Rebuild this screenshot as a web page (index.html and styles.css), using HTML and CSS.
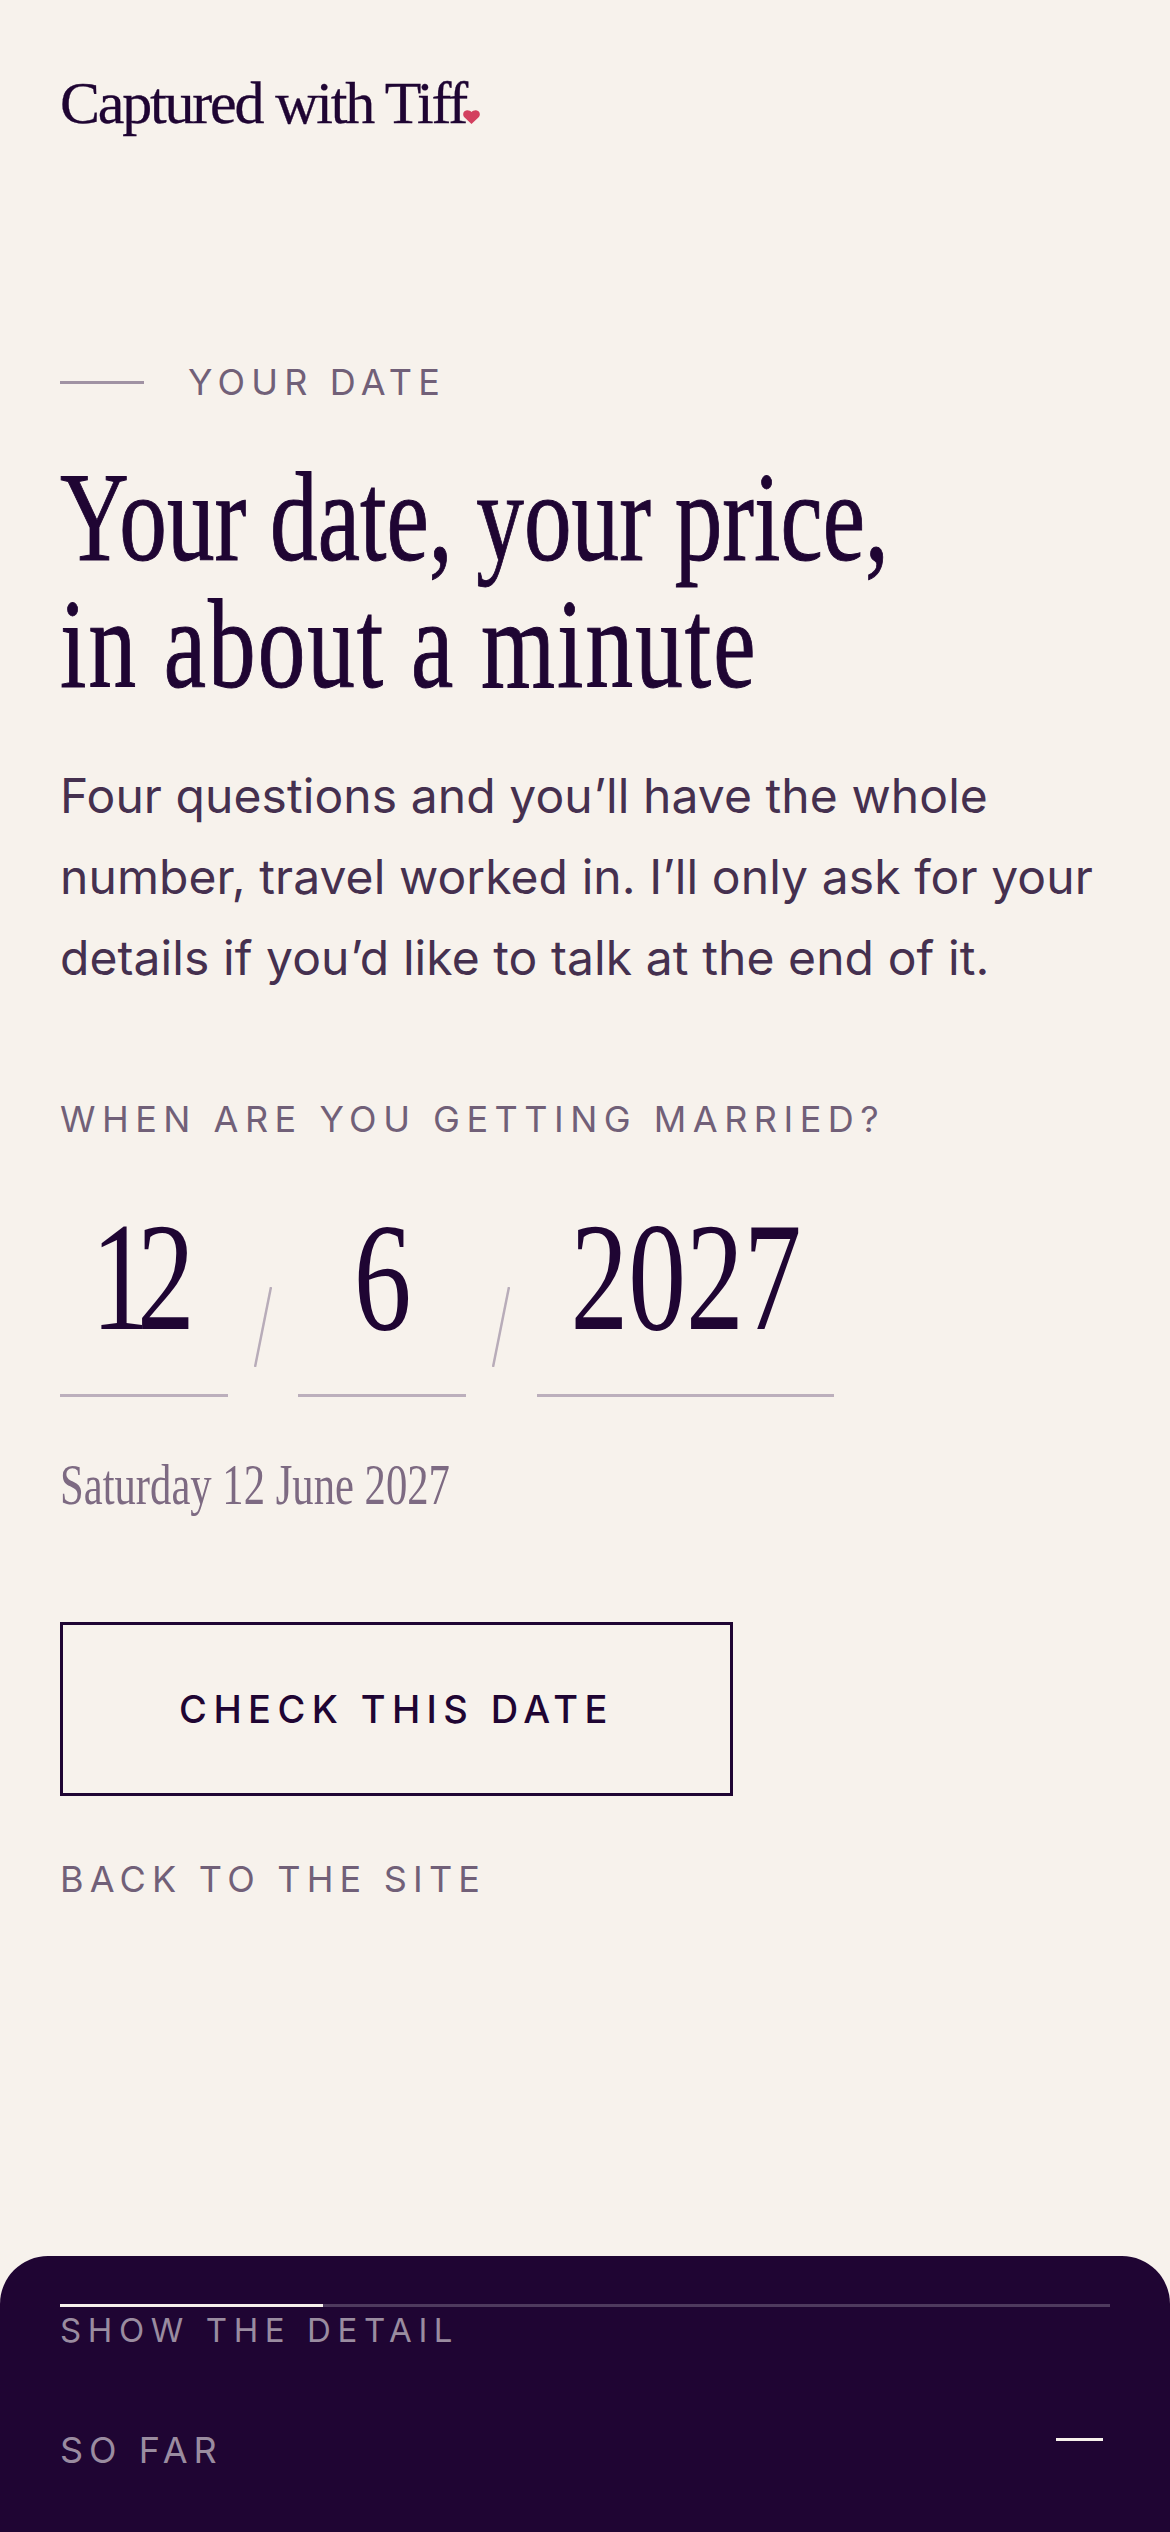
FILE: index.html
```html
<!DOCTYPE html>
<html lang="en">
<head>
    <meta charset="UTF-8">
    <meta name="viewport" content="width=device-width, initial-scale=1.0">
    <title>Your date - Captured with Tiff</title>
    <link rel="stylesheet" href="styles.css">
</head>
<body>
    <div class="page">
        <header class="brand">
            <span class="logo">Captured with Tiff</span>
            <svg class="heart" viewBox="0 0 17 14" width="17" height="14"><path d="M8.5 14 L1.6 7.6 C-1.2 4.6 0.4 0.4 4 0.2 C5.9 0.1 7.5 0.9 8.5 2 C9.5 0.9 11.1 0.1 13 0.2 C16.6 0.4 18.2 4.6 15.4 7.6 Z" fill="#d3405f"/></svg>
        </header>

        <main class="content">
            <div class="eyebrow">
                <span class="eyebrow-line"></span>
                <span class="eyebrow-text">YOUR DATE</span>
            </div>
            <h1 class="title">Your date, your price,<br><span class="title-second">in about a minute</span></h1>
            <p class="intro">Four questions and you’ll have the whole<br>number, travel worked in. I’ll only ask for your<br>details if you’d like to talk at the end of it.</p>

            <form class="date-form">
                <label class="date-label">WHEN ARE YOU GETTING MARRIED?</label>
                <div class="date-row">
                    <div class="date-field short"><span class="date-value tight">12</span></div>
                    <svg class="slash" viewBox="0 0 18 80" width="18" height="80"><line x1="17" y1="0" x2="1" y2="80" stroke="#b8acb9" stroke-width="2.5"/></svg>
                    <div class="date-field short"><span class="date-value">6</span></div>
                    <svg class="slash" viewBox="0 0 18 80" width="18" height="80"><line x1="17" y1="0" x2="1" y2="80" stroke="#b8acb9" stroke-width="2.5"/></svg>
                    <div class="date-field long"><span class="date-value">2027</span></div>
                </div>
                <p class="date-note">Saturday 12 June 2027</p>
                <button type="button" class="check-btn">CHECK THIS DATE</button>
                <a class="back-link">BACK TO THE SITE</a>
            </form>
        </main>

        <footer class="panel">
            <div class="progress"><div class="progress-fill"></div></div>
            <div class="panel-detail">SHOW THE DETAIL</div>
            <div class="panel-row">
                <span class="panel-sofar">SO FAR</span>
                <span class="panel-dash"></span>
            </div>
        </footer>
    </div>
</body>
</html>
```

FILE: styles.css
```css
* {
    box-sizing: border-box;
}
body {
    margin: 0;
    background-color: #f7f2ec;
    font-family: Inter, "Liberation Sans", sans-serif;
    color: #1f0533;
}
.page {
    display: flex;
    flex-direction: column;
    height: 2532px;
    overflow: hidden;
}
.brand {
    display: flex;
    align-items: flex-end;
    padding: 69px 60px 0;
    height: 137px;
}
.logo {
    display: inline-block;
    font-family: "Liberation Serif", serif;
    font-size: 60px;
    line-height: 68px;
    letter-spacing: -2.2px;
    white-space: nowrap;
    -webkit-text-stroke: .3px #1f0533;
}
.heart {
    margin-left: -3px;
    margin-bottom: 13px;
}
.content {
    padding: 0 60px;
}
.eyebrow {
    display: flex;
    align-items: center;
    gap: 44px;
    margin-top: 223px;
}
.eyebrow-line {
    width: 84px;
    height: 3px;
    background-color: #a092a3;
}
.eyebrow-text {
    font-size: 36px;
    line-height: 44px;
    letter-spacing: 6.2px;
    color: #716078;
}
.title {
    margin: 50px 0 0;
    font-family: "Liberation Serif", serif;
    font-weight: 400;
    font-size: 126px;
    line-height: 127px;
    white-space: nowrap;
    transform: scaleX(.756);
    transform-origin: left;
    -webkit-text-stroke: 1px #1f0533;
}
.title-second {
    letter-spacing: 2.6px;
}
.intro {
    margin: 47px 0 0;
    font-size: 48px;
    line-height: 81px;
    letter-spacing: .08px;
    color: #45304f;
    white-space: nowrap;
}
.date-form {
    display: flex;
    flex-direction: column;
    align-items: flex-start;
}
.date-label {
    margin-top: 99px;
    font-size: 36px;
    line-height: 44px;
    letter-spacing: 6.5px;
    color: #716078;
}
.date-row {
    display: flex;
    align-items: flex-end;
    gap: 26px;
    margin-top: 51px;
}
.date-field {
    display: flex;
    justify-content: center;
    height: 205px;
    border-bottom: 3px solid #bcafbc;
}
.short {
    width: 168px;
}
.long {
    width: 297px;
    margin-left: 1px;
}
.date-value {
    display: inline-block;
    font-family: "Liberation Serif", serif;
    font-size: 154px;
    line-height: 170px;
    transform: scaleX(.75);
}
.tight {
    letter-spacing: -16px;
    margin-right: 14px;
}
.slash {
    margin-bottom: 30px;
}
.date-note {
    margin: 56px 0 0;
    font-family: "Liberation Serif", serif;
    font-size: 56px;
    line-height: 64px;
    color: #7d6a82;
    white-space: nowrap;
    transform: scaleX(.762);
    transform-origin: left;
}
.check-btn {
    width: 673px;
    height: 174px;
    margin-top: 105px;
    background: none;
    border: 3px solid #1f0533;
    font-family: inherit;
    font-size: 38px;
    font-weight: 500;
    letter-spacing: 6.4px;
    color: #1f0533;
}
.back-link {
    margin-top: 61px;
    font-size: 36px;
    line-height: 44px;
    letter-spacing: 6.2px;
    color: #716078;
}
.panel {
    margin-top: auto;
    height: 276px;
    padding: 48px 60px 0;
    background-color: #1f0533;
    border-radius: 48px 48px 0 0;
}
.progress {
    height: 3px;
    background-color: #4e3a5e;
}
.progress-fill {
    width: 25%;
    height: 100%;
    background-color: #f7f2ec;
}
.panel-detail {
    margin-top: 3px;
    font-size: 33px;
    line-height: 40px;
    letter-spacing: 6.6px;
    color: #9a8ca0;
}
.panel-row {
    display: flex;
    justify-content: space-between;
    align-items: flex-start;
    margin-top: 78px;
    padding-right: 7px;
}
.panel-sofar {
    font-size: 36px;
    line-height: 44px;
    letter-spacing: 6px;
    color: #9a8ca0;
}
.panel-dash {
    width: 47px;
    height: 3px;
    margin-top: 10px;
    background-color: #f7f2ec;
}
```
